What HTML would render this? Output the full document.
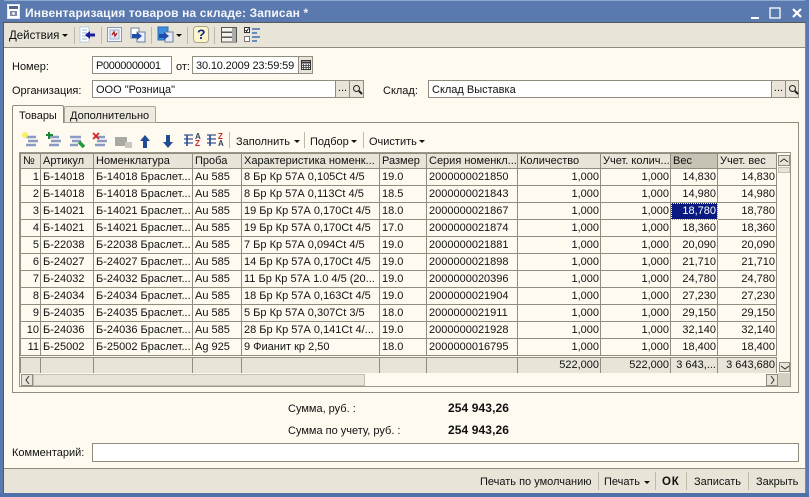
<!DOCTYPE html>
<html><head><meta charset="utf-8"><style>
html,body{margin:0;padding:0}
body{width:809px;height:497px;overflow:hidden;position:relative;background:#fffaf0;font:11px/14px "Liberation Sans",sans-serif;color:#111}
.a{position:absolute;white-space:nowrap}
.f{position:absolute;background:#fff;border:1px solid #8f8c80;box-sizing:border-box;padding:2px 3px 0;height:18px;white-space:nowrap}
.b{position:absolute;background:#e8e4d8;border:1px solid #8f8c80;box-sizing:border-box;height:18px;width:15px;text-align:center}
.sep{position:absolute;width:1px;background:#bdb9ab}
table{position:absolute;left:20px;top:153px;border-collapse:collapse;table-layout:fixed;width:756px;font-size:11px;line-height:13px}
td{border:1px solid #8f8c80;padding:1px 1px 0 2px;height:17px;box-sizing:border-box;overflow:hidden;white-space:nowrap}
tr{height:17px}
tr.h td{background:#e8e4d8;height:15px;padding-top:0}
tr.h{height:15px}
td.r{text-align:right}
tr.sp{height:2px}tr.sp td{height:2px;padding:0;background:#fffaf0;border-left:0;border-right:0;font-size:0;line-height:0}
tr.t td{background:#e8e4d8;border-top:1px solid #8f8c80;border-bottom:0;height:15px}
tr.t{height:15px}
svg{position:absolute;overflow:visible}
</style></head><body>
<!-- frame -->
<div class="a" style="left:0;top:0;width:809px;height:23px;background:#5a7aaf;border-top:1px solid #8fa8d2;box-sizing:border-box"></div>
<div class="a" style="left:0;top:0;width:4px;height:497px;background:#5a7aaf"></div>
<div class="a" style="left:805px;top:0;width:4px;height:497px;background:#5a7aaf"></div>
<div class="a" style="left:0;top:493px;width:809px;height:4px;background:#4f70a8"></div>
<div class="a" style="left:3px;top:22px;width:803px;height:1px;background:#55595c"></div>
<div class="a" style="left:3px;top:23px;width:1px;height:470px;background:#55595c"></div>
<div class="a" style="left:805px;top:23px;width:1px;height:470px;background:#8a8a80"></div>
<div class="a" style="left:4px;top:23px;width:801px;height:24px;background:#e8e4d8;border-bottom:1px solid #8f8c80"></div>
<div class="a" style="left:4px;top:468px;width:801px;height:25px;background:#e8e4d8;border-top:1px solid #8f8c80;box-sizing:border-box"></div>
<!-- title -->
<svg style="left:7px;top:4px" width="14" height="15"><rect x=".5" y=".5" width="12" height="14" fill="#fff" stroke="#dfe6f0"/><rect x="2" y="2" width="9" height="3" fill="#52648a"/><rect x="3" y="7" width="7" height="5" fill="#7f8aa5"/><circle cx="6.5" cy="9.5" r="1.4" fill="#fff"/></svg>
<div class="a" style="left:25px;top:6px;color:#f4f6fb;font-weight:bold;font-size:12px;letter-spacing:.13px">Инвентаризация товаров на складе: Записан *</div>
<svg style="left:750px;top:6px" width="52" height="14" fill="none" stroke="#fff"><rect x="1" y="11" width="8" height="2" fill="#fff" stroke="none"/><rect x="20" y="2" width="10" height="10" stroke-width="1.3"/><path d="M43 3l8 8M51 3l-8 8" stroke-width="2.2"/></svg>
<!-- toolbar -->
<div class="a" style="left:9px;top:29px;font-size:11.5px">Действия</div>
<svg style="left:62px;top:34px" width="6" height="4"><path d="M0 0h6L3 3z" fill="#111"/></svg>
<div class="sep" style="left:74px;top:27px;height:17px"></div>
<svg style="left:80px;top:26px" width="16" height="18"><rect x="0" y="1" width="9" height="15" fill="#fff" stroke="#b9cbe0"/><path d="M2 4h5M2 7h5M2 10h5M2 13h5" stroke="#8fb4d8"/><path d="M5 9l5-4v2.500h5v3h-5V13z" fill="#1c1c9c"/></svg>
<div class="sep" style="left:101px;top:27px;height:17px"></div>
<svg style="left:107px;top:27px" width="15" height="15"><rect x=".5" y=".5" width="14" height="14" fill="#f4f6fa" stroke="#7f9bbd"/><rect x="3" y="3" width="9" height="9" fill="#dfe8f5" stroke="#9db2cd"/><path d="M5 8l2-3 1 4 2-3" stroke="#b01818" fill="none" stroke-width="1.300"/></svg>
<svg style="left:130px;top:27px" width="17" height="16"><rect x="1" y="1" width="8" height="10" fill="#fff" stroke="#6f7f9c"/><rect x="7" y="5" width="8" height="10" fill="#eef" stroke="#6f7f9c"/><path d="M2 7l5 0v-2l5 4-5 4v-2H2z" fill="#1f4ea8"/></svg>
<div class="sep" style="left:151px;top:27px;height:17px"></div>
<svg style="left:157px;top:27px" width="17" height="16"><rect x="1" y="0" width="10" height="13" fill="#3f8fe0" stroke="#2e6db5"/><rect x="8" y="5" width="8" height="10" fill="#e8e8f4" stroke="#6f7f9c"/><path d="M2 7l5 0v-2l5 4-5 4v-2H2z" fill="#1f4ea8"/></svg>
<svg style="left:176px;top:34px" width="6" height="4"><path d="M0 0h6L3 3z" fill="#111"/></svg>
<div class="sep" style="left:187px;top:27px;height:17px"></div>
<svg style="left:193px;top:26px" width="16" height="18"><rect x=".5" y=".5" width="15" height="16" rx="3" fill="#fdf6c8" stroke="#a9a690"/></svg>
<div class="a" style="left:197px;top:27px;font-weight:bold;font-size:14px;color:#17268c">?</div>
<div class="sep" style="left:214px;top:27px;height:17px"></div>
<svg style="left:221px;top:27px" width="16" height="16" fill="#f4f2ea" stroke="#555"><rect x=".5" y=".5" width="15" height="4.500"/><rect x=".5" y="5.500" width="15" height="4.500"/><rect x=".5" y="10.500" width="15" height="4.500"/><rect x="11" y="1" width="4" height="14" fill="#aaa" stroke="none"/></svg>
<svg style="left:244px;top:27px" width="17" height="16"><rect x=".5" y=".5" width="5" height="5" fill="#fff" stroke="#333"/><path d="M1.500 3l1 1.500 2-3" stroke="#111" fill="none"/><rect x=".5" y="9.500" width="5" height="5" fill="#fff" stroke="#777"/><path d="M8 2h8M8 6h5M8 10h8M8 14h5" stroke="#3f6fb5" stroke-width="1.600"/></svg>
<!-- form -->
<div class="a" style="left:12px;top:60px">Номер:</div>
<div class="f" style="left:92px;top:56px;width:80px;letter-spacing:-.35px">P0000000001</div>
<div class="a" style="left:176px;top:60px">от:</div>
<div class="f" style="left:192px;top:56px;width:107px;letter-spacing:-.15px">30.10.2009 23:59:59</div>
<div class="b" style="left:298px;top:56px"><svg style="left:2px;top:3px" width="10" height="10"><rect x=".5" y=".5" width="9" height="9" fill="#fff" stroke="#333"/><path d="M0 2.500h10" stroke="#333" stroke-width="2"/><path d="M2.500 4v5M5 4v5M7.500 4v5M1 5.500h8M1 7.500h8" stroke="#555"/></svg></div>
<div class="a" style="left:12px;top:84px">Организация:</div>
<div class="f" style="left:92px;top:80px;width:244px">ООО "Розница"</div>
<div class="b" style="left:335px;top:80px;line-height:14px">...</div>
<div class="b" style="left:349px;top:80px"><svg style="left:2px;top:3px" width="11" height="11" fill="none" stroke="#222"><circle cx="4.500" cy="4.500" r="3"/><path d="M7 7l3 3" stroke-width="2"/></svg></div>
<div class="a" style="left:383px;top:84px">Склад:</div>
<div class="f" style="left:428px;top:80px;width:344px">Склад Выставка</div>
<div class="b" style="left:771px;top:80px;line-height:14px">...</div>
<div class="b" style="left:785px;top:80px;width:14px"><svg style="left:2px;top:3px" width="11" height="11" fill="none" stroke="#222"><circle cx="4.500" cy="4.500" r="3"/><path d="M7 7l3 3" stroke-width="2"/></svg></div>
<!-- tabs -->
<div class="a" style="left:12px;top:122px;width:787px;height:271px;border:1px solid #8f8c80;box-sizing:border-box"></div>
<div class="a" style="left:64px;top:106px;width:92px;height:17px;background:#eeeadf;border:1px solid #a9a698;border-radius:2px 2px 0 0;box-sizing:border-box;padding:2px 0 0 5px">Дополнительно</div>
<div class="a" style="left:12px;top:105px;width:52px;height:18px;background:#fffaf0;border:1px solid #8f8c80;border-bottom:0;border-radius:2px 2px 0 0;box-sizing:border-box;padding:3px 0 0 6px">Товары</div>
<!-- grid toolbar -->
<svg style="left:22px;top:131px" width="200" height="18">
<g stroke="#8a9bc4" stroke-width="2.500" fill="none"><path d="M4 6h10M6 10h10M4 14h10"/><path d="M27 6h10M29 10h10M27 14h10"/><path d="M48 6h11M50 10h9M48 14h8"/><path d="M73 6h10M75 10h10M73 14h10"/></g>
<circle cx="3" cy="4" r="3" fill="#f8ee60"/>
<path d="M27 1v7M24 4h7" stroke="#168a30" stroke-width="2"/>
<path d="M57 11l5 5" stroke="#1e9a3e" stroke-width="3.500"/>
<path d="M71 2l6 6M77 2l-6 6" stroke="#d8261c" stroke-width="1.800"/>
<rect x="93" y="6" width="12" height="9" fill="#a9a9a2"/><rect x="103" y="11" width="7" height="6" fill="#c8c8c0"/>
<path d="M123 4l5 6h-3v7h-4v-7h-3z" fill="#1f4c94"/><path d="M144 4h4v7h3l-5 6-5-6h3z" fill="#1f4c94"/>
<g stroke="#5f72a0" stroke-width="1.600" fill="none"><path d="M162 4h9M162 8h9M162 12h9M185 4h9M185 8h9M185 12h9"/></g>
<path d="M165 4v11M188 4v11" stroke="#1f4c94" stroke-width="1.600"/>
</svg>
<div class="a" style="left:195px;top:133px;font-size:8px;line-height:7px;font-weight:bold;color:#345">A<br><span style="color:#c22">Z</span></div>
<div class="a" style="left:218px;top:133px;font-size:8px;line-height:7px;font-weight:bold;color:#c22">Z<br><span style="color:#345">A</span></div>
<div class="sep" style="left:229px;top:132px;height:16px"></div>
<div class="a" style="left:236px;top:135px">Заполнить</div><svg style="left:294px;top:140px" width="6" height="4"><path d="M0 0h6L3 3z" fill="#111"/></svg>
<div class="sep" style="left:304px;top:132px;height:16px"></div>
<div class="a" style="left:310px;top:135px">Подбор</div><svg style="left:351px;top:140px" width="6" height="4"><path d="M0 0h6L3 3z" fill="#111"/></svg>
<div class="sep" style="left:363px;top:132px;height:16px"></div>
<div class="a" style="left:369px;top:135px">Очистить</div><svg style="left:419px;top:140px" width="6" height="4"><path d="M0 0h6L3 3z" fill="#111"/></svg>
<!-- grid -->
<table>
<colgroup><col style="width:20px"><col style="width:53px"><col style="width:99px"><col style="width:49px"><col style="width:138px"><col style="width:47px"><col style="width:91px"><col style="width:83px"><col style="width:70px"><col style="width:47px"><col style="width:59px"></colgroup>
<tr class="h"><td>№</td><td>Артикул</td><td>Номенклатура</td><td>Проба</td><td>Характеристика номенк...</td><td>Размер</td><td>Серия номенкл...</td><td>Количество</td><td>Учет. колич...</td><td style="background:#c6c3b5">Вес</td><td>Учет. вес</td></tr>
<tr><td class="r">1</td><td>Б-14018</td><td>Б-14018 Браслет...</td><td>Au 585</td><td>8 Бр Кр 57А 0,105Ct 4/5</td><td>19.0</td><td>2000000021850</td><td class="r">1,000</td><td class="r">1,000</td><td class="r">14,830</td><td class="r">14,830</td></tr>
<tr><td class="r">2</td><td>Б-14018</td><td>Б-14018 Браслет...</td><td>Au 585</td><td>8 Бр Кр 57А 0,113Ct 4/5</td><td>18.5</td><td>2000000021843</td><td class="r">1,000</td><td class="r">1,000</td><td class="r">14,980</td><td class="r">14,980</td></tr>
<tr><td class="r">3</td><td>Б-14021</td><td>Б-14021 Браслет...</td><td>Au 585</td><td>19 Бр Кр 57А 0,170Ct 4/5</td><td>18.0</td><td>2000000021867</td><td class="r">1,000</td><td class="r">1,000</td><td class="r" style="background:#0a1a80;color:#fff;outline:1px dotted #fff;outline-offset:-1px">18,780</td><td class="r">18,780</td></tr>
<tr><td class="r">4</td><td>Б-14021</td><td>Б-14021 Браслет...</td><td>Au 585</td><td>19 Бр Кр 57А 0,170Ct 4/5</td><td>17.0</td><td>2000000021874</td><td class="r">1,000</td><td class="r">1,000</td><td class="r">18,360</td><td class="r">18,360</td></tr>
<tr><td class="r">5</td><td>Б-22038</td><td>Б-22038 Браслет...</td><td>Au 585</td><td>7 Бр Кр 57А 0,094Ct 4/5</td><td>19.0</td><td>2000000021881</td><td class="r">1,000</td><td class="r">1,000</td><td class="r">20,090</td><td class="r">20,090</td></tr>
<tr><td class="r">6</td><td>Б-24027</td><td>Б-24027 Браслет...</td><td>Au 585</td><td>14 Бр Кр 57А 0,170Ct 4/5</td><td>19.0</td><td>2000000021898</td><td class="r">1,000</td><td class="r">1,000</td><td class="r">21,710</td><td class="r">21,710</td></tr>
<tr><td class="r">7</td><td>Б-24032</td><td>Б-24032 Браслет...</td><td>Au 585</td><td>11 Бр Кр 57А 1.0 4/5 (20...</td><td>19.0</td><td>2000000020396</td><td class="r">1,000</td><td class="r">1,000</td><td class="r">24,780</td><td class="r">24,780</td></tr>
<tr><td class="r">8</td><td>Б-24034</td><td>Б-24034 Браслет...</td><td>Au 585</td><td>18 Бр Кр 57А 0,163Ct 4/5</td><td>19.0</td><td>2000000021904</td><td class="r">1,000</td><td class="r">1,000</td><td class="r">27,230</td><td class="r">27,230</td></tr>
<tr><td class="r">9</td><td>Б-24035</td><td>Б-24035 Браслет...</td><td>Au 585</td><td>5 Бр Кр 57А 0,307Ct 3/5</td><td>18.0</td><td>2000000021911</td><td class="r">1,000</td><td class="r">1,000</td><td class="r">29,150</td><td class="r">29,150</td></tr>
<tr><td class="r">10</td><td>Б-24036</td><td>Б-24036 Браслет...</td><td>Au 585</td><td>28 Бр Кр 57А 0,141Ct 4/...</td><td>19.0</td><td>2000000021928</td><td class="r">1,000</td><td class="r">1,000</td><td class="r">32,140</td><td class="r">32,140</td></tr>
<tr><td class="r">11</td><td>Б-25002</td><td>Б-25002 Браслет...</td><td>Ag 925</td><td>9 Фианит кр 2,50</td><td>18.0</td><td>2000000016795</td><td class="r">1,000</td><td class="r">1,000</td><td class="r">18,400</td><td class="r">18,400</td></tr>
<tr class="sp"><td></td><td></td><td></td><td></td><td></td><td></td><td></td><td></td><td></td><td></td><td></td></tr>
<tr class="t"><td></td><td></td><td></td><td></td><td></td><td></td><td></td><td class="r">522,000</td><td class="r">522,000</td><td class="r">3 643,...</td><td class="r">3 643,680</td></tr>
</table>
<!-- scrollbars -->
<div class="a" style="left:19px;top:152px;width:772px;height:235px;border:1px solid #9a978a;box-sizing:border-box"></div>
<div class="b" style="left:778px;top:155px;width:12px;height:11px"></div>
<svg style="left:780px;top:158px" width="8" height="5" fill="none" stroke="#333"><path d="M0 4l4-3 4 3"/></svg>
<div class="a" style="left:778px;top:167px;width:12px;height:6px;background:#e8e4d8;border:1px solid #c4c1b3;box-sizing:border-box"></div>
<div class="b" style="left:779px;top:362px;width:11px;height:10px"></div>
<svg style="left:781px;top:365px" width="8" height="5" fill="none" stroke="#333"><path d="M0 1l4 3 4-3"/></svg>
<div class="b" style="left:21px;top:374px;width:12px;height:12px"></div>
<svg style="left:25px;top:376px" width="5" height="8" fill="none" stroke="#333"><path d="M4 0L1 4l3 4"/></svg>
<div class="a" style="left:33px;top:374px;width:332px;height:12px;background:#e8e4d8;border:1px solid #c4c1b3;box-sizing:border-box"></div>
<div class="b" style="left:766px;top:374px;width:12px;height:12px"></div>
<svg style="left:770px;top:376px" width="5" height="8" fill="none" stroke="#333"><path d="M1 0l3 4-3 4"/></svg>
<div class="a" style="left:778px;top:373px;width:12px;height:13px;background:#d4d0c2"></div>
<!-- totals -->
<div class="a" style="left:288px;top:402px">Сумма, руб. :</div>
<div class="a" style="left:288px;top:424px">Сумма по учету, руб. :</div>
<div class="a" style="left:448px;top:401px;font-weight:bold;font-size:12px;letter-spacing:.1px">254 943,26</div>
<div class="a" style="left:448px;top:423px;font-weight:bold;font-size:12px;letter-spacing:.1px">254 943,26</div>
<div class="a" style="left:12px;top:446px">Комментарий:</div>
<div class="f" style="left:92px;top:443px;width:707px;height:19px"></div>
<!-- bottom -->
<div class="a" style="left:480px;top:475px">Печать по умолчанию</div>
<div class="sep" style="left:598px;top:472px;height:18px"></div>
<div class="a" style="left:604px;top:475px">Печать</div><svg style="left:644px;top:481px" width="6" height="4"><path d="M0 0h6L3 3z" fill="#111"/></svg>
<div class="sep" style="left:655px;top:472px;height:18px"></div>
<div class="a" style="left:662px;top:475px;font-weight:bold;font-size:11.500px;letter-spacing:.8px">ОК</div>
<div class="sep" style="left:686px;top:472px;height:18px"></div>
<div class="a" style="left:694px;top:475px">Записать</div>
<div class="sep" style="left:748px;top:472px;height:18px"></div>
<div class="a" style="left:756px;top:475px">Закрыть</div>
</body></html>
